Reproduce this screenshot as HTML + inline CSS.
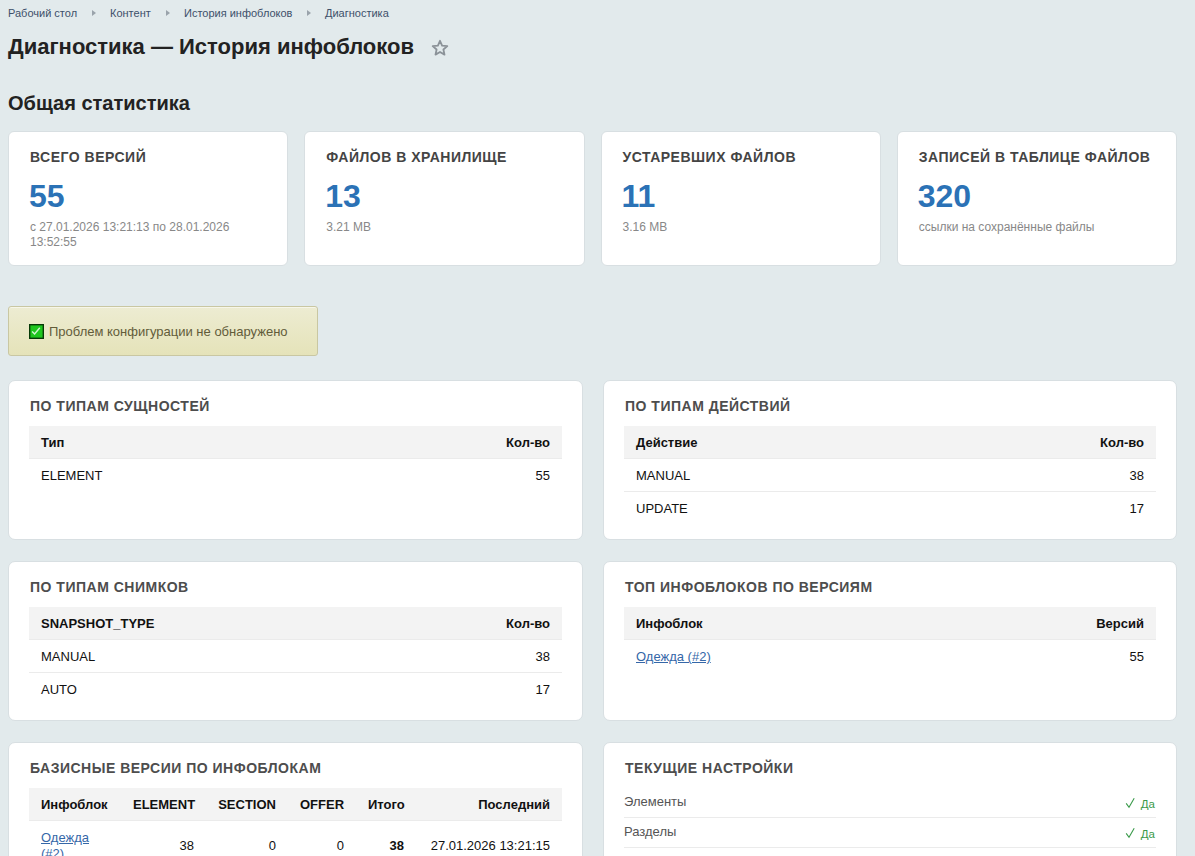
<!DOCTYPE html>
<html><head><meta charset="utf-8">
<style>
html,body{margin:0;padding:0;}
body{width:1195px;height:856px;overflow:hidden;background:#e2eaec;font-family:"Liberation Sans",sans-serif;position:relative;color:#000;}
.abs{position:absolute;white-space:nowrap;}
.bc{top:7px;font-size:11px;color:#3d506a;line-height:12px;}
.arr{position:absolute;top:9.5px;width:0;height:0;border-top:3.5px solid transparent;border-bottom:3.5px solid transparent;border-left:4px solid #9aa3ab;}
h1{position:absolute;margin:0;left:8px;top:34px;font-size:22px;font-weight:bold;color:#222;line-height:25px;white-space:nowrap;}
h2{position:absolute;margin:0;left:8px;top:92px;font-size:20px;font-weight:bold;color:#222;line-height:23px;white-space:nowrap;}
.card{position:absolute;top:131px;height:133px;width:278.25px;background:#fff;border:1px solid #d8dfe2;border-radius:6px;}
.card .t{position:absolute;left:21px;top:17px;font-size:14px;font-weight:bold;color:#444;letter-spacing:0.5px;line-height:16px;white-space:nowrap;}
.card .n{position:absolute;left:20px;top:46px;font-size:32px;font-weight:bold;color:#2b72b6;line-height:36px;}
.card .s{position:absolute;left:21px;top:88px;width:238px;font-size:12px;color:#888;line-height:15px;}
.msg{position:absolute;left:8px;top:306px;width:308px;height:48px;border:1px solid #c9c7a2;border-radius:3px;background:linear-gradient(#edecd2,#e5e3b9);box-shadow:inset 0 1px 0 rgba(255,255,255,.5);}
.msg .cb{position:absolute;left:20px;top:17px;width:12.5px;height:12.5px;background:#1ec61e;border:1px solid #063a06;box-shadow:inset 0 0 0 0.5px #0b5a0b;}
.msg .tx{position:absolute;left:40px;top:17px;font-size:13px;color:#625c3a;line-height:15px;white-space:nowrap;}
.panel{position:absolute;width:573px;height:158px;background:#fff;border:1px solid #d8dfe2;border-radius:7px;}
.panel .pt{position:absolute;left:21px;top:17px;font-size:14px;font-weight:bold;color:#4d4d4d;letter-spacing:0.5px;line-height:16px;white-space:nowrap;}
table{position:absolute;left:20px;top:45px;width:533px;border-collapse:collapse;font-size:13px;}
th,td{padding:9px 12px 7px;line-height:16px;border-bottom:1px solid #ebebeb;text-align:left;}
th{background:#f3f3f3;font-weight:bold;color:#111;}
td{color:#111;}
.r{text-align:right;}
a{color:#3567a8;text-decoration:underline;}
.set{position:absolute;left:20px;top:45px;width:532px;}
.set .row{height:29px;border-bottom:1px solid #ebebeb;position:relative;font-size:13px;color:#555;}
.set .row span.l{position:absolute;left:0;top:6px;line-height:16px;}
.set .row span.v{position:absolute;right:1px;top:9px;line-height:14px;font-size:11.5px;color:#3a9a4a;}
.set .row svg{position:absolute;right:21.5px;top:9px;}
</style></head><body>
<div class="abs bc" style="left:8px">Рабочий стол</div>
<div class="arr" style="left:92px"></div>
<div class="abs bc" style="left:110px">Контент</div>
<div class="arr" style="left:166px"></div>
<div class="abs bc" style="left:184px">История инфоблоков</div>
<div class="arr" style="left:307px"></div>
<div class="abs bc" style="left:325px">Диагностика</div>

<h1>Диагностика — История инфоблоков</h1>
<svg style="position:absolute;left:431px;top:39px" width="18" height="18" viewBox="0 0 18 18"><path d="M9 1.8 L11.1 6.6 L16.3 7.1 L12.4 10.5 L13.5 15.6 L9 13 L4.5 15.6 L5.6 10.5 L1.7 7.1 L6.9 6.6 Z" fill="none" stroke="#8b9298" stroke-width="1.8" stroke-linejoin="round"/></svg>

<h2>Общая статистика</h2>

<div class="card" style="left:8px"><div class="t">ВСЕГО ВЕРСИЙ</div><div class="n">55</div><div class="s">с 27.01.2026 13:21:13 по 28.01.2026 13:52:55</div></div>
<div class="card" style="left:304.25px"><div class="t">ФАЙЛОВ В ХРАНИЛИЩЕ</div><div class="n">13</div><div class="s">3.21 MB</div></div>
<div class="card" style="left:600.5px"><div class="t">УСТАРЕВШИХ ФАЙЛОВ</div><div class="n">11</div><div class="s">3.16 MB</div></div>
<div class="card" style="left:896.75px"><div class="t">ЗАПИСЕЙ В ТАБЛИЦЕ ФАЙЛОВ</div><div class="n">320</div><div class="s">ссылки на сохранённые файлы</div></div>

<div class="msg"><div class="cb"><svg width="12" height="12" viewBox="0 0 12 12" style="position:absolute;left:0;top:0"><path d="M2.1 6.4 L4.6 9 L9.8 2.8" fill="none" stroke="#d0f4d0" stroke-width="1.4"/></svg></div><div class="tx">Проблем конфигурации не обнаружено</div></div>

<div class="panel" style="left:8px;top:380px"><div class="pt">ПО ТИПАМ СУЩНОСТЕЙ</div>
<table><tr><th>Тип</th><th class="r">Кол-во</th></tr><tr><td style="border-bottom:none">ELEMENT</td><td class="r" style="border-bottom:none">55</td></tr></table></div>

<div class="panel" style="left:603px;top:380px;width:572px"><div class="pt">ПО ТИПАМ ДЕЙСТВИЙ</div>
<table style="width:532px"><tr><th>Действие</th><th class="r">Кол-во</th></tr><tr><td>MANUAL</td><td class="r">38</td></tr><tr><td style="border-bottom:none">UPDATE</td><td class="r" style="border-bottom:none">17</td></tr></table></div>

<div class="panel" style="left:8px;top:561px"><div class="pt">ПО ТИПАМ СНИМКОВ</div>
<table><tr><th>SNAPSHOT_TYPE</th><th class="r">Кол-во</th></tr><tr><td>MANUAL</td><td class="r">38</td></tr><tr><td style="border-bottom:none">AUTO</td><td class="r" style="border-bottom:none">17</td></tr></table></div>

<div class="panel" style="left:603px;top:561px;width:572px"><div class="pt">ТОП ИНФОБЛОКОВ ПО ВЕРСИЯМ</div>
<table style="width:532px"><tr><th>Инфоблок</th><th class="r">Версий</th></tr><tr><td style="border-bottom:none"><a>Одежда (#2)</a></td><td class="r" style="border-bottom:none">55</td></tr></table></div>

<div class="panel" style="left:8px;top:742px;height:300px"><div class="pt">БАЗИСНЫЕ ВЕРСИИ ПО ИНФОБЛОКАМ</div>
<table style="table-layout:fixed"><colgroup><col style="width:92px"><col style="width:85px"><col style="width:82px"><col style="width:68px"><col style="width:60px"><col></colgroup>
<tr><th>Инфоблок</th><th class="r">ELEMENT</th><th class="r">SECTION</th><th class="r">OFFER</th><th class="r">Итого</th><th class="r">Последний</th></tr>
<tr><td><a>Одежда (#2)</a></td><td class="r">38</td><td class="r">0</td><td class="r">0</td><td class="r"><b>38</b></td><td class="r">27.01.2026 13:21:15</td></tr></table></div>

<div class="panel" style="left:603px;top:742px;height:300px;width:572px"><div class="pt">ТЕКУЩИЕ НАСТРОЙКИ</div>
<div class="set">
<div class="row"><span class="l">Элементы</span><svg width="10" height="12" viewBox="0 0 10 12"><path d="M1.2 6.4 L4.0 10.3 L9.2 1.2" fill="none" stroke="#3a9a4a" stroke-width="1.1"/></svg><span class="v">Да</span></div>
<div class="row"><span class="l">Разделы</span><svg width="10" height="12" viewBox="0 0 10 12"><path d="M1.2 6.4 L4.0 10.3 L9.2 1.2" fill="none" stroke="#3a9a4a" stroke-width="1.1"/></svg><span class="v">Да</span></div>
</div></div>
</body></html>
